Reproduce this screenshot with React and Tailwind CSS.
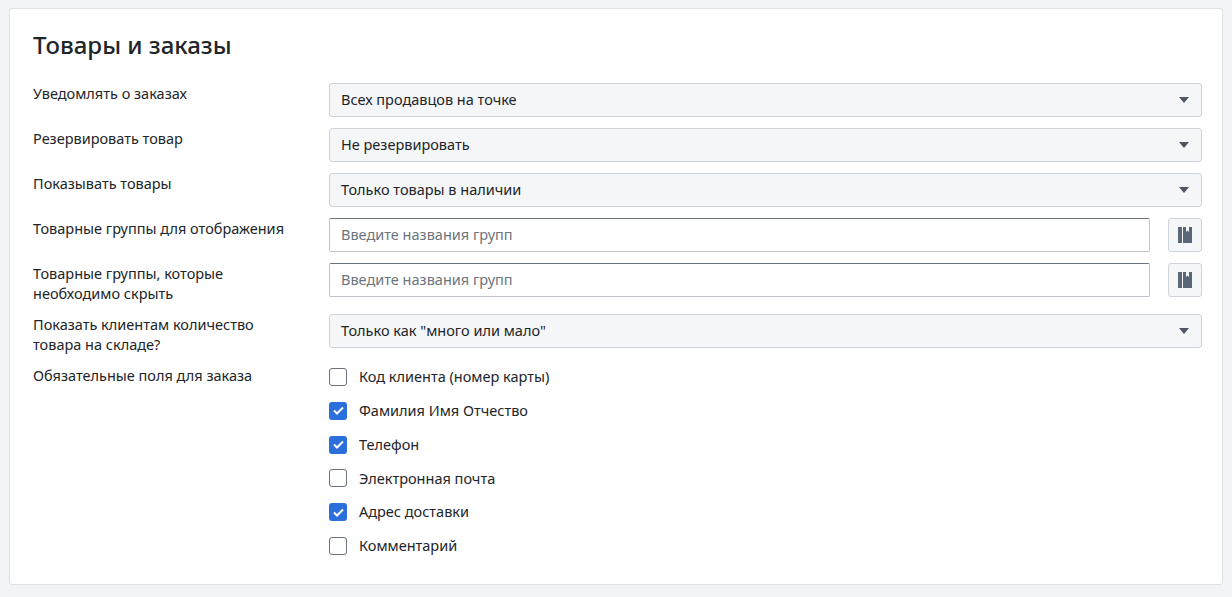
import React from "react";

const Caret = () => (
  <svg width="10" height="6" viewBox="0 0 10 6" className="absolute right-[12px] top-1/2 -translate-y-1/2">
    <path d="M0 0h10L5 6z" fill="#4b5563" />
  </svg>
);

const BookIcon = () => (
  <svg width="14" height="16" viewBox="0 0 14 16">
    <rect x="0" y="0" width="4" height="16" fill="#5b6678" />
    <path d="M5 0h9v16H5V0zM8 0v5l1.5-1.5L11 5V0z" fill="#5b6678" fillRule="evenodd" />
  </svg>
);

function Row({ label, children }) {
  return (
    <div className="flex">
      <div className="w-[296px] pr-4 pt-0 leading-5 text-[14.5px] text-[#212529]">{label}</div>
      <div className="flex-1 flex gap-[18px]">{children}</div>
    </div>
  );
}

function Select({ value }) {
  return (
    <div className="relative flex-1 h-[34px] border border-[#ced4da] rounded-[3px] bg-[#f5f6f8] px-[11px] flex items-center text-[14.5px] text-[#212529]">
      {value}
      <Caret />
    </div>
  );
}

function Input() {
  return (
    <>
      <div className="flex-1 h-[34px] border border-[#bfc4ca] border-t-[#6b7280] rounded-[2px] bg-white px-[11px] flex items-center text-[14.5px] text-[#6c757d]">
        Введите названия групп
      </div>
      <div className="w-[34px] h-[34px] border border-[#ced4da] rounded-[3px] bg-[#f5f6f8] flex items-center justify-center">
        <BookIcon />
      </div>
    </>
  );
}

const checks = [
  ["Код клиента (номер карты)", false],
  ["Фамилия Имя Отчество", true],
  ["Телефон", true],
  ["Электронная почта", false],
  ["Адрес доставки", true],
  ["Комментарий", false],
];

export default function App() {
  return (
    <div className="min-h-[597px] bg-[#f2f3f5] pt-[8px] px-[9px] pb-[7px]" style={{ fontFamily: '"Noto Sans", "Open Sans", sans-serif' }}>
      <div className="bg-white border border-[#dee2e6] rounded-[3px] pl-[23px] pr-[20px] pt-[20px] pb-[28px]">
        <h1 className="text-[24px] font-medium text-[#212529] leading-8 mb-[22px]">Товары и заказы</h1>
        <div className="flex flex-col gap-[11px]">
          <Row label="Уведомлять о заказах"><Select value="Всех продавцов на точке" /></Row>
          <Row label="Резервировать товар"><Select value="Не резервировать" /></Row>
          <Row label="Показывать товары"><Select value="Только товары в наличии" /></Row>
          <Row label="Товарные группы для отображения"><Input /></Row>
          <Row label={<>Товарные группы, которые<br />необходимо скрыть</>}><Input /></Row>
          <Row label={<>Показать клиентам количество<br />товара на складе?</>}><Select value={'Только как "много или мало"'} /></Row>
          <Row label="Обязательные поля для заказа">
            <div className="flex flex-col gap-[13.8px] pt-[2px]">
              {checks.map(([t, c]) => (
                <div key={t} className="flex items-center gap-[12px] h-[20px] text-[14.5px] text-[#212529]">
                  {c ? (
                    <span className="w-[18px] h-[18px] rounded-[3px] bg-[#2a6fdb] flex items-center justify-center">
                      <svg width="11" height="9" viewBox="0 0 11 9"><path d="M1 4.5l3 3L10 1.5" stroke="white" strokeWidth="2" fill="none" /></svg>
                    </span>
                  ) : (
                    <span className="w-[18px] h-[18px] rounded-[3px] border border-[#6b7280] bg-white" />
                  )}
                  {t}
                </div>
              ))}
            </div>
          </Row>
        </div>
      </div>
    </div>
  );
}
